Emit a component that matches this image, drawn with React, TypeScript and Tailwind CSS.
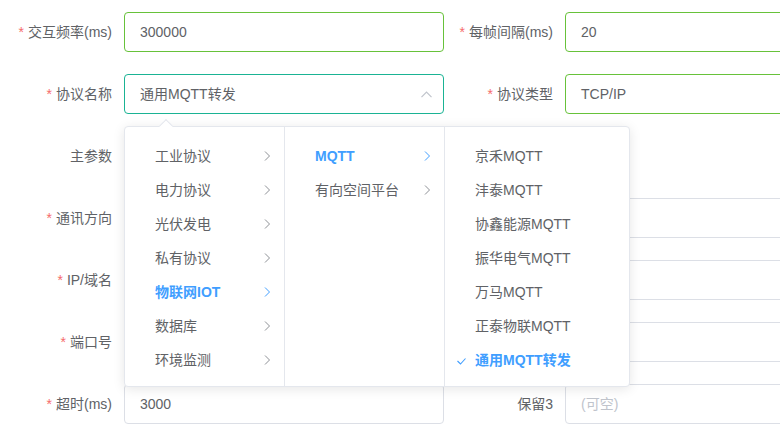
import { Fragment } from "react"

type Node = { label: string; active?: boolean; children?: boolean; checked?: boolean }

const col1: Node[] = [
  { label: "工业协议", children: true },
  { label: "电力协议", children: true },
  { label: "光伏发电", children: true },
  { label: "私有协议", children: true },
  { label: "物联网IOT", children: true, active: true },
  { label: "数据库", children: true },
  { label: "环境监测", children: true },
]

const col2: Node[] = [
  { label: "MQTT", children: true, active: true },
  { label: "有向空间平台", children: true },
]

const col3: Node[] = [
  { label: "京禾MQTT" },
  { label: "沣泰MQTT" },
  { label: "协鑫能源MQTT" },
  { label: "振华电气MQTT" },
  { label: "万马MQTT" },
  { label: "正泰物联MQTT" },
  { label: "通用MQTT转发", active: true, checked: true },
]

const Label = ({ text, required, wide }: { text: string; required?: boolean; wide?: boolean }) => (
  <div
    className={
      wide
        ? "w-[124px] shrink-0 pr-3 text-right text-sm leading-10 text-[#606266]"
        : "w-[121px] shrink-0 pr-3 text-right text-sm leading-10 text-[#606266]"
    }
  >
    {required && <span className="mr-1 text-[#f56c6c]">*</span>}
    {text}
  </div>
)

const Input = ({ value, placeholder, ok }: { value?: string; placeholder?: string; ok?: boolean }) => (
  <div
    className={
      ok
        ? "flex h-10 w-[320px] shrink-0 items-center rounded border border-[#67c23a] px-[15px] text-sm text-[#606266]"
        : "flex h-10 w-[320px] shrink-0 items-center rounded border border-[#dcdfe6] px-[15px] text-sm text-[#606266]"
    }
  >
    {value ? value : <span className="text-[#c0c4cc]">{placeholder}</span>}
  </div>
)

const Chevron = ({ active }: { active?: boolean }) => (
  <svg
    width="7"
    height="10"
    viewBox="0 0 7 10"
    className="absolute right-[13px] top-1/2 -translate-y-1/2"
    fill="none"
    stroke={active ? "#409eff" : "#8d9095"}
    strokeWidth="1"
  >
    <polyline points="1,0.5 5.5,5 1,9.5" />
  </svg>
)

const Menu = ({ items, last }: { items: Node[]; last?: boolean }) => (
  <div
    className={
      last
        ? "flex w-[184px] flex-col pt-3 pb-[9px]"
        : "flex w-[160px] flex-col border-r border-[#e4e7ed] pt-3 pb-[9px]"
    }
  >
    {items.map((n) => (
      <div
        key={n.label}
        className={
          n.active
            ? "relative flex h-[34px] items-center pl-[30px] text-sm font-bold text-[#409eff]"
            : "relative flex h-[34px] items-center pl-[30px] text-sm text-[#606266]"
        }
      >
        {n.checked && (
          <svg width="9" height="7" viewBox="0 0 9 7" className="absolute left-[12px] top-[15px]" fill="none" stroke="#409eff" strokeWidth="1.1">
            <polyline points="0.5,3 3.5,6 8.5,0.5" />
          </svg>
        )}
        {n.label}
        {n.children && <Chevron active={n.active} />}
      </div>
    ))}
  </div>
)

export default function App() {
  return (
    <div className="relative h-[428px] w-[780px] overflow-hidden bg-white font-['Liberation_Sans','Noto_Sans_CJK_SC',sans-serif]">
      <div className="flex flex-col gap-[22px] pt-3">
        <div className="flex h-10">
          <Label text="交互频率(ms)" required wide />
          <Input value="300000" ok />
          <Label text="每帧间隔(ms)" required />
          <Input value="20" ok />
        </div>

        <div className="flex h-10">
          <Label text="协议名称" required wide />
          <div className="relative z-10">
            <div className="relative flex h-10 w-[320px] items-center rounded border border-[#1ab394] px-[15px] text-sm text-[#606266]">
              通用MQTT转发
              <svg width="11" height="7" viewBox="0 0 11 7" className="absolute right-[11px] top-[16px]" fill="none" stroke="#c0c4cc" strokeWidth="1.2">
                <polyline points="0.5,6.2 5.5,1 10.5,6.2" />
              </svg>
            </div>
            {/* cascader dropdown */}
            <div className="absolute left-0 top-[52px] flex rounded border border-[#e4e7ed] bg-white shadow-[0_2px_12px_0_rgba(0,0,0,0.1)]">
              <div className="absolute -top-[6px] left-[36px] h-[10px] w-[10px] rotate-45 border-l border-t border-[#e4e7ed] bg-white" />
              <Menu items={col1} />
              <Menu items={col2} />
              <Menu items={col3} last />
            </div>
          </div>
          <Label text="协议类型" required />
          <Input value="TCP/IP" ok />
        </div>

        <div className="flex h-10">
          <Label text="主参数" wide />
          <Input value="" />
        </div>

        {["通讯方向", "IP/域名", "端口号"].map((t) => (
          <Fragment key={t}>
            <div className="flex h-10">
              <Label text={t} required wide />
              <Input value="" />
              <Label text="" />
              <Input value="" />
            </div>
          </Fragment>
        ))}

        <div className="flex h-10">
          <Label text="超时(ms)" required wide />
          <Input value="3000" />
          <Label text="保留3" />
          <Input placeholder="(可空)" />
        </div>
      </div>
    </div>
  )
}
